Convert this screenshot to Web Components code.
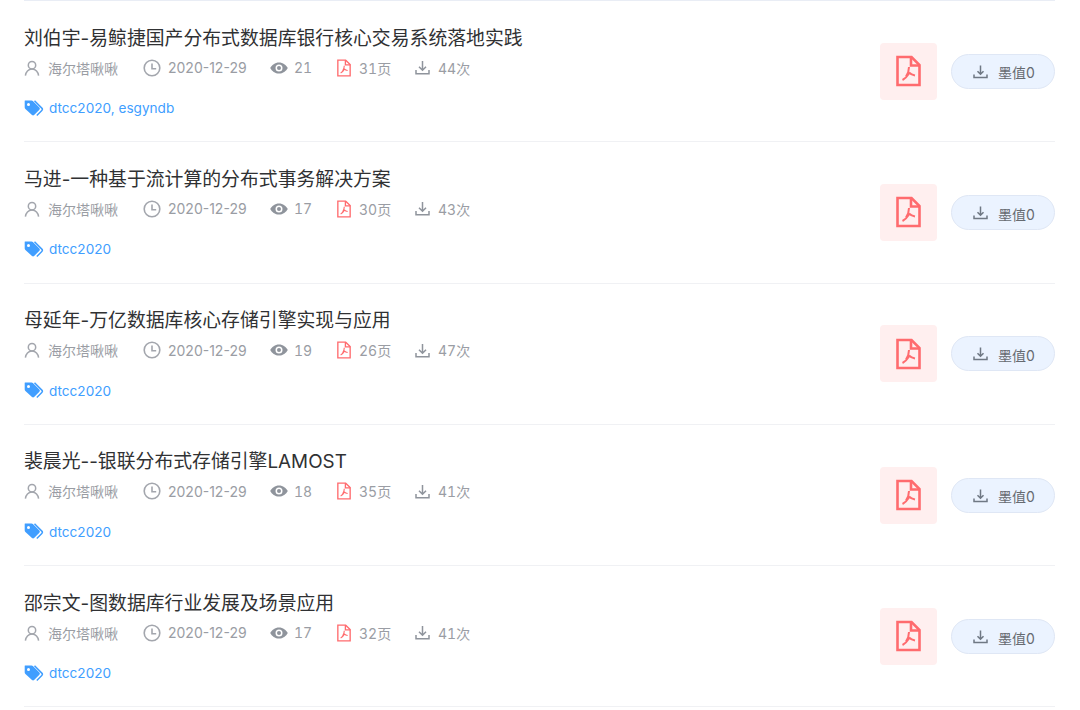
<!DOCTYPE html>
<html lang="zh">
<head>
<meta charset="utf-8">
<title>文档列表</title>
<style>
html, body { margin: 0; padding: 0; background: #fff; }
body { font-family: Inter, "Noto Sans CJK SC", sans-serif; }
</style>
</head>
<body>
<doc-list>
  <doc-row title="刘伯宇-易鲸捷国产分布式数据库银行核心交易系统落地实践" views="21" pages="31" downloads="44" tags="dtcc2020, esgyndb"></doc-row>
  <doc-row title="马进-一种基于流计算的分布式事务解决方案" views="17" pages="30" downloads="43" tags="dtcc2020"></doc-row>
  <doc-row title="母延年-万亿数据库核心存储引擎实现与应用" views="19" pages="26" downloads="47" tags="dtcc2020"></doc-row>
  <doc-row title="裴晨光--银联分布式存储引擎LAMOST" views="18" pages="35" downloads="41" tags="dtcc2020"></doc-row>
  <doc-row title="邵宗文-图数据库行业发展及场景应用" views="17" pages="32" downloads="41" tags="dtcc2020"></doc-row>
</doc-list>
<script>
const ICONS = {
    user: '<svg width="16" height="16" viewBox="0 0 16 16" fill="none" stroke="#a3a6ad" stroke-width="1.5"><circle cx="8" cy="5.2" r="3.7"/><path d="M1.4 15.6c.3-3.7 3-6.6 6.6-6.6s6.300 2.900 6.600 6.600"/></svg>',
    clock: '<svg width="18" height="18" viewBox="0 0 18 18" fill="none" stroke="#a3a6ad" stroke-width="1.6"><circle cx="9" cy="9" r="7.800"/><path d="M9 4.500V9.800H13.200"/></svg>',
    eye: '<svg width="18" height="12" viewBox="0 0 18 12"><path fill="#8f949c" fill-rule="evenodd" d="M9 .4C5 .4 1.800 3 .2 6c1.600 3 4.800 5.600 8.800 5.600s7.200-2.600 8.800-5.600C16.200 3 13 .4 9 .4zM9 9.500a3.500 3.500 0 1 1 0-7 3.500 3.500 0 0 1 0 7z"/><circle cx="9" cy="6" r="2" fill="#8f949c"/></svg>',
    pdf: '<svg width="14" height="18" viewBox="0 0 25 31" fill="none" stroke="#ff6b6e" stroke-width="2.400"><path d="M1.500 1.500H15.500L23.500 9.500V29.500H1.500z"/><path d="M15 1.500V10H23.500"/><path stroke-width="2" d="M13 11.500c0 4-1 6.500-3 9.500M13 17c1.500 1.500 3 2.500 6 3M6.500 24.500c2-1 4-2.500 6.500-6.500"/></svg>',
    pdfBig: '<svg width="25" height="32" viewBox="0 0 25 31" fill="none" stroke="#ff6b6e" stroke-width="2.600"><path d="M1.500 1.500H15.500L23.500 9.500V29.500H1.500z"/><path d="M15 1.500V10H23.500"/><path stroke-width="2" d="M13 11.500c0 4-1 6.500-3 9.500M13 17c1.500 1.500 3 2.500 6 3M6.500 24.500c2-1 4-2.500 6.500-6.500"/></svg>',
    download: '<svg width="15" height="15" viewBox="0 0 15 15" fill="none" stroke="#8f949c" stroke-width="1.500"><path d="M7.500 1V10M4 6.800L7.500 10.300L11 6.800M1 10V13.800H14V10"/></svg>',
    save: '<svg width="15" height="15" viewBox="0 0 15 15" fill="none" stroke="#6f7884" stroke-width="1.500"><path d="M7.500 1.500V10M4.500 7.300L7.500 10.300L10.500 7.300M1 10.500V13.500H14V10.500"/></svg>',
    tag: '<svg width="20" height="17" viewBox="0 0 20 17"><path fill="#409eff" fill-rule="evenodd" d="M1 .5h6.500c.6 0 1 .2 1.400.6l6.500 6.500c.6.600.6 1.500 0 2.100l-5.300 5.300c-.6.600-1.500.600-2.100 0L1.400 8.900C1 8.500.7 8 .7 7.500V1c0-.3 0-.5.300-.5zM4.500 3a1.500 1.500 0 1 0 0 3 1.500 1.500 0 0 0 0-3z"/><path fill="none" stroke="#409eff" stroke-width="1.500" d="M10.500.8l7.300 7.300c.8.800.8 1.600 0 2.400l-5 5"/></svg>'
};

class DocList extends HTMLElement {
    constructor() {
        super();
        this.attachShadow({mode: "open"}).innerHTML = `
        <style>
        :host {
            display: block;
            padding: 0 24px 0 24px;
        }
        .wrap { border-top: 1px solid #e9edf5; width: 1031px; }
        </style>
        <div class="wrap"><slot></slot></div>`;
    }
}

class DocRow extends HTMLElement {
    constructor() {
        super();
        this.attachShadow({mode: "open"});
    }

    connectedCallback() {
        this.render();
    }

    render() {
        const a = (name) => this.getAttribute(name);
        this.shadowRoot.innerHTML = `
        <style>
        :host {
            display: flex;
            box-sizing: border-box;
            height: 141.3px;
            align-items: flex-start;
            justify-content: space-between;
            border-bottom: 1px solid #f0f1f4;
            font-family: Inter, "Noto Sans CJK SC", sans-serif;
        }
        .main { display: flex; flex-direction: column; padding-top: 23.6px; }
        .title {
            font-size: 18.85px;
            line-height: 28px;
            color: #303133;
            white-space: nowrap;
        }
        .meta {
            display: flex;
            align-items: center;
            height: 20px;
            margin-top: 5px;
            font-size: 14px;
            color: #9a9da4;
            white-space: nowrap;
        }
        .item { display: flex; align-items: center; }
        .item svg { display: block; }
        .user { width: 119px; gap: 8px; box-sizing: border-box; }
        .date { width: 127px; gap: 7px; }
        .views { width: 67px; gap: 6px; font-variant-numeric: tabular-nums; }
        .pages { width: 78px; gap: 8px; font-variant-numeric: tabular-nums; }
        .downloads { gap: 8px; font-variant-numeric: tabular-nums; }
        .tags {
            display: flex;
            align-items: center;
            gap: 5px;
            height: 20px;
            margin-top: 20.5px;
            font-size: 13.6px;
            color: #409eff;
        }
        .side { display: flex; align-items: flex-start; padding-top: 41.7px; }
        .file {
            display: flex;
            align-items: center;
            justify-content: center;
            width: 57px;
            height: 57px;
            border-radius: 4px;
            background: #ffefef;
        }
        .btn {
            display: flex;
            align-items: center;
            justify-content: center;
            gap: 10px;
            box-sizing: border-box;
            width: 104px;
            height: 35px;
            margin: 11.2px 0 0 14px;
            padding-left: 2px;
            border: 1px solid #dfe7f5;
            border-radius: 18px;
            background: #ebf3ff;
            font-size: 14px;
            color: #666a70;
        }
        .btn span { padding-top: 2px; }
        </style>
        <div class="main">
            <div class="title">${a("title")}</div>
            <div class="meta">
                <span class="item user">${ICONS.user}海尔塔啾啾</span>
                <span class="item date">${ICONS.clock}2020-12-29</span>
                <span class="item views">${ICONS.eye}${a("views")}</span>
                <span class="item pages">${ICONS.pdf}${a("pages")}页</span>
                <span class="item downloads">${ICONS.download}${a("downloads")}次</span>
            </div>
            <div class="tags">${ICONS.tag}<span>${a("tags")}</span></div>
        </div>
        <div class="side">
            <div class="file">${ICONS.pdfBig}</div>
            <div class="btn">${ICONS.save}<span>墨值0</span></div>
        </div>`;
    }
}

customElements.define("doc-list", DocList);
customElements.define("doc-row", DocRow);
</script>
</body>
</html>
